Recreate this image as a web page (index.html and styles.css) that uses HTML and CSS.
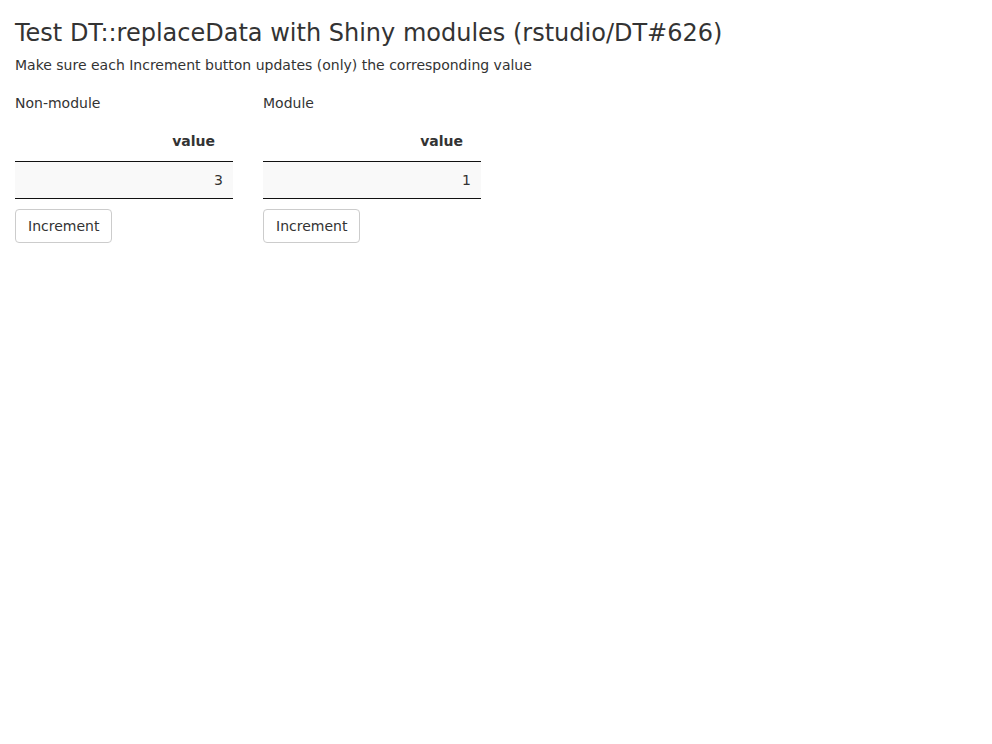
FILE: index.html
```html
<!DOCTYPE html>
<html>
<head>
<meta charset="utf-8">
<link rel="stylesheet" href="styles.css">
</head>
<body>
<div class="container">
  <h2 class="title">Test DT::replaceData with Shiny modules (rstudio/DT#626)</h2>
  <p class="lead">Make sure each Increment button updates (only) the corresponding value</p>
  <div class="row">
    <div class="col">
      <div class="label">Non-module</div>
      <table class="dt">
        <thead><tr><th>value</th></tr></thead>
        <tbody><tr><td>3</td></tr></tbody>
      </table>
      <button class="btn">Increment</button>
    </div>
    <div class="col">
      <div class="label">Module</div>
      <table class="dt">
        <thead><tr><th>value</th></tr></thead>
        <tbody><tr><td>1</td></tr></tbody>
      </table>
      <button class="btn">Increment</button>
    </div>
  </div>
</div>
</body>
</html>
```
FILE: styles.css
```css
html, body {
  margin: 0;
  padding: 0;
  background: #fff;
}
body {
  font-family: "DejaVu Sans", sans-serif;
  font-size: 14px;
  line-height: 20px;
  color: #333;
}
.container {
  padding: 0 15px;
}
.title {
  font-size: 24px;
  font-weight: 500;
  line-height: 26px;
  margin: 20px 0 9px;
}
.lead {
  margin: 0 0 10px;
}
.row {
  display: flex;
  margin: 0 -15px;
}
.col {
  width: 218px;
  padding: 8px 15px 0;
}
.label {
  margin-bottom: 8px;
}
.dt {
  width: 100%;
  border-collapse: separate;
  border-spacing: 0;
}
.dt th {
  font-weight: bold;
  text-align: right;
  padding: 10px 18px 10px 10px;
  border-bottom: 1px solid #111;
}
.dt td {
  text-align: right;
  padding: 8px 10px;
  background: #f9f9f9;
  border-bottom: 1px solid #111;
}
.btn {
  margin-top: 10px;
  font-family: inherit;
  font-size: 14px;
  line-height: 20px;
  color: #333;
  background: #fff;
  border: 1px solid #ccc;
  border-radius: 4px;
  padding: 6px 12px;
}
```
